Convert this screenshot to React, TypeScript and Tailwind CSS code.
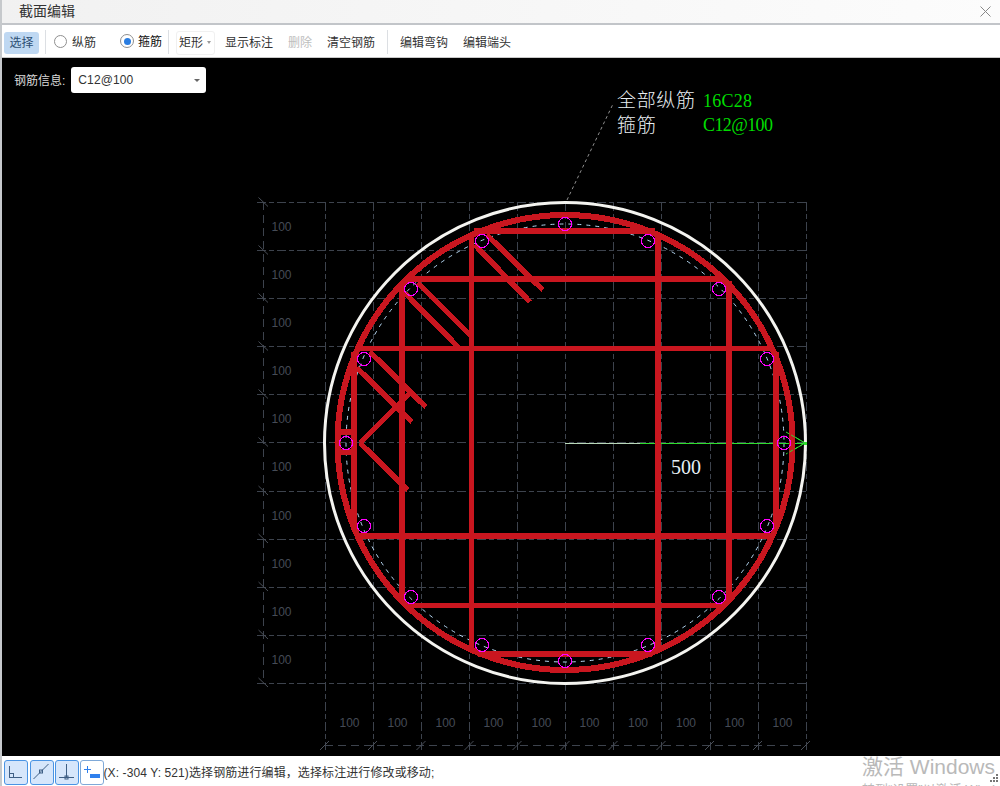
import React from "react";

const RED = "#c9161f";
const xs = [325, 373, 421.5, 469.5, 517.5, 565.5, 613.5, 661.5, 710, 758, 806];
const ys = [202.5, 250.5, 298.5, 346.5, 394.5, 442.5, 491, 539, 587, 635, 683];
const leftLabels = [227, 275, 323, 371, 419, 467.5, 516, 564, 612, 660];
const bottomLabels = [349.5, 397.5, 445.5, 493.5, 541.5, 589.5, 638, 686, 734.5, 782.5];
const bars: [number, number, number, number][] = [
  [474, 231, 655, 231],
  [406, 279, 724, 279],
  [358, 348.5, 774, 348.5],
  [358, 536, 770, 536],
  [406, 605.5, 724, 605.5],
  [478, 654, 652, 654],
  [471.5, 233, 471.5, 652],
  [658, 234, 658, 650],
  [402, 283, 402, 602],
  [729, 281, 729, 602],
  [354, 352, 354, 530],
  [776, 352, 776, 528],
  [475, 245, 530, 302],
  [487, 235, 543, 290],
  [405, 293, 458, 347],
  [418, 283, 472, 337],
  [370, 352, 426, 407],
  [357, 368, 412, 422],
  [360, 443, 410, 393],
  [360, 443, 408, 490],
  [339, 432, 354, 432],
  [339, 452, 354, 452],
];
const pins: [number, number][] = [
  [565, 224], [648, 241], [719, 289], [767, 359], [784, 443], [767, 526], [719, 597], [648, 645],
  [565, 661], [482, 645], [411, 597], [364, 526], [346, 443], [364, 359], [411, 289], [482, 241],
];

function Sep() {
  return <div className="h-[24px] w-px shrink-0 bg-[#dcdfe3]" />;
}

function Section() {
  return (
    <svg className="absolute inset-0 h-full w-full" viewBox="2 58 998 698">
      <g stroke="#3d434d" strokeWidth="1" fill="none" shapeRendering="crispEdges">
        {xs.map((x) => (
          <line key={x} x1={x} y1={202} x2={x} y2={750} strokeDasharray="9 3 5 3" />
        ))}
        {ys.map((y) => (
          <line key={y} x1={257} y1={y} x2={806} y2={y} strokeDasharray="9 3 5 3" />
        ))}
        <line x1={263.5} y1={202} x2={263.5} y2={683} strokeDasharray="8 5" />
        <line x1={325} y1={745.5} x2={806} y2={745.5} strokeDasharray="8 5" />
      </g>
      <g stroke="#4a4f58" strokeWidth="1" fill="none">
        {ys.map((y) => (
          <line key={y} x1={258.5} y1={y - 5} x2={268} y2={y + 4} />
        ))}
        {xs.map((x) => (
          <line key={x} x1={x - 5} y1={750} x2={x + 4} y2={741} />
        ))}
      </g>
      <g fill="#454b56" fontFamily="'Liberation Sans', sans-serif" fontSize="12" textAnchor="middle">
        {leftLabels.map((y) => (
          <text key={y} x={281.5} y={y + 3.5}>100</text>
        ))}
        {bottomLabels.map((x) => (
          <text key={x} x={x} y={727}>100</text>
        ))}
      </g>
      <line x1={567} y1={200} x2={613} y2={104} stroke="#8f8f8f" strokeWidth="1" strokeDasharray="3 3" />
      <circle cx={565} cy={443} r={240.5} fill="none" stroke="#f4f4f0" strokeWidth="3" />
      <circle cx={565} cy={443} r={219} fill="none" stroke="#b5d7f2" strokeWidth="1" strokeDasharray="4 5" />
      <line x1={565} y1={443.5} x2={640} y2={443.5} stroke="#b9d8b9" strokeWidth="1" shapeRendering="crispEdges" />
      <line x1={640} y1={443.5} x2={805} y2={443.5} stroke="#2fe02f" strokeWidth="1" shapeRendering="crispEdges" />
      <circle cx={565} cy={442.5} r={227.5} fill="none" stroke={RED} strokeWidth="6" shapeRendering="crispEdges" />
      <g stroke={RED} strokeWidth="5.5" fill="none" shapeRendering="crispEdges">
        {bars.map(([a, b, c, d], i) => (
          <line key={i} x1={a} y1={b} x2={c} y2={d} />
        ))}
      </g>
      <g stroke="#ff00ff" strokeWidth="1" fill="none" shapeRendering="crispEdges">
        {pins.map(([x, y]) => (
          <circle key={`${x}-${y}`} cx={x} cy={y} r={6.5} />
        ))}
      </g>
      <g stroke="#2fe02f" strokeWidth="1" fill="none">
        <path d="M786 432L805 443L786 454" strokeDasharray="4 2" />
        <path d="M795 437L805 443L795 449" />
      </g>
      <rect x={804} y={442} width={3} height={3} fill="#2fe02f" />
      <g fontFamily="'Noto Sans CJK SC', sans-serif" fontSize="19" fontWeight="300" fill="#e8eef2">
        <text x={617} y={107} textLength={78}>全部纵筋</text>
        <text x={617} y={132} textLength={39}>箍筋</text>
      </g>
      <g fontFamily="'Liberation Serif', serif" fontSize="18" fill="#00dc00">
        <text x={703} y={107} textLength={49}>16C28</text>
        <text x={703} y={131} textLength={70}>C12@100</text>
      </g>
      <text x={671} y={474} fontFamily="'Liberation Serif', serif" fontSize="20" fill="#e6f0f6">500</text>
    </svg>
  );
}

function ModeIcon({ kind }: { kind: "corner" | "slant" | "foot" | "add" }) {
  return (
    <svg width="22" height="22" viewBox="0 0 22 22" fill="none" stroke="#3f5f85" strokeWidth="1">
      {kind === "corner" && (
        <>
          <path d="M4.5 5V16.5H17" />
          <rect x="4.5" y="12.5" width="4" height="4" />
        </>
      )}
      {kind === "slant" && (
        <>
          <path d="M2.5 18L17.5 3" />
          <rect x="8.5" y="9" width="3" height="3" />
        </>
      )}
      {kind === "foot" && (
        <>
          <path d="M10.5 3V16.5M3 16.5H18" />
          <rect x="9" y="15" width="3" height="3" />
        </>
      )}
      {kind === "add" && (
        <>
          <path d="M6.5 5V12M3 8.5H10" stroke="#2f80ed" />
          <rect x="9" y="13" width="10" height="4" fill="#2f80ed" stroke="none" />
        </>
      )}
    </svg>
  );
}

function ModeButton({ kind, active }: { kind: "corner" | "slant" | "foot" | "add"; active?: boolean }) {
  return (
    <div
      className={
        active
          ? "flex h-[25px] w-[24px] shrink-0 items-center justify-center rounded-[3px] border border-[#4a94e4] bg-[#d6e6fb]"
          : "flex h-[25px] w-[24px] shrink-0 items-center justify-center rounded-[3px] border border-[#7fa9d8] bg-white"
      }
    >
      <ModeIcon kind={kind} />
    </div>
  );
}

export default function App() {
  return (
    <div
      className="flex h-[786px] w-[1000px] flex-col overflow-hidden border-l-2 border-[#c6c9cc] bg-white text-[12px] text-[#333]"
      style={{ fontFamily: "'Liberation Sans', 'Noto Sans CJK SC', sans-serif" }}
    >
      <div className="flex h-[23px] shrink-0 items-center bg-linear-to-r from-[#f1f1f1] to-[#fcfcfc] pr-[9px] pl-[17px]">
        <span className="text-[14px] text-[#333]">截面编辑</span>
        <svg className="ml-auto" width="11" height="11" viewBox="0 0 11 11" stroke="#888" strokeWidth="1">
          <path d="M0.5 0.5L10.5 10.5M10.5 0.5L0.5 10.5" />
        </svg>
      </div>
      <div className="h-[2px] shrink-0 bg-[#c2c5c9]" />
      <div className="flex h-[33px] shrink-0 items-center border-b border-[#c8c8c8] bg-white pt-[3px]">
        <div className="ml-[2px] flex h-[22px] w-[35px] items-center justify-center rounded-[3px] bg-[#bfd8f2] text-[#2d4f73]">选择</div>
        <div className="-mt-[2px] ml-[6px]"><Sep /></div>
        <span className="-mt-[2px] ml-[8px] h-[13px] w-[13px] rounded-full border border-[#8f8f8f] bg-white" />
        <span className="ml-[5px]">纵筋</span>
        <span className="-mt-[3px] ml-[24px] flex h-[14px] w-[14px] items-center justify-center rounded-full border border-[#8f8f8f] bg-white">
          <span className="h-[7px] w-[7px] rounded-full bg-[#2a7de1]" />
        </span>
        <span className="-mt-[2px] ml-[4px] text-[#111]">箍筋</span>
        <div className="-mt-[2px] ml-[6px]"><Sep /></div>
        <div className="ml-[7px] flex h-[24px] w-[39px] items-center rounded-[3px] border border-[#f0f0f0] pl-[2px]">
          <span>矩形</span>
          <span className="ml-[4px] h-0 w-0 border-x-[2.5px] border-t-[3px] border-x-transparent border-t-[#999]" />
        </div>
        <span className="ml-[10px]">显示标注</span>
        <span className="ml-[15px] text-[#bdbdbd]">删除</span>
        <span className="ml-[15px]">清空钢筋</span>
        <div className="-mt-[2px] ml-[12px]"><Sep /></div>
        <span className="ml-[12px]">编辑弯钩</span>
        <span className="ml-[15px]">编辑端头</span>
      </div>
      <div className="relative flex-1 bg-black">
        <Section />
        <div className="relative flex items-center pt-[9px] pl-[12px]">
          <span className="mt-[2px] text-[#d8d8d8]">钢筋信息:</span>
          <div className="ml-[6px] flex h-[26px] w-[135px] items-center justify-between rounded-[3px] bg-white pr-[6px] pl-[7px]">
            <span className="text-[12px] tracking-[0.1px] text-[#333]">C12@100</span>
            <span className="h-0 w-0 border-x-[3px] border-t-[3px] border-x-transparent border-t-[#666]" />
          </div>
        </div>
      </div>
      <div className="relative flex h-[30px] shrink-0 items-center bg-white pt-[2px] pl-[2px]">
        <ModeButton kind="corner" active />
        <div className="ml-[1.5px]"><ModeButton kind="slant" active /></div>
        <div className="ml-[1px]"><ModeButton kind="foot" active /></div>
        <div className="ml-[1px]"><ModeButton kind="add" /></div>
        <span className="mt-[2px] tracking-[0.1px] text-[#333]">(X: -304 Y: 521)选择钢筋进行编辑，选择标注进行修改或移动;</span>
        <div className="absolute top-0 left-[860px] text-[#b9b9b9]">
          <div className="text-[21px] leading-[22px] whitespace-nowrap">激活 Windows</div>
          <div className="mt-[4px] text-[13px] leading-[16px] whitespace-nowrap">转到“设置”以激活 Windows。</div>
        </div>
        <svg className="absolute right-[1px] bottom-[3px]" width="9" height="9" viewBox="0 0 9 9" fill="#777">
          <rect x="6" y="0" width="2" height="2" />
          <rect x="3" y="3" width="2" height="2" />
          <rect x="6" y="3" width="2" height="2" />
          <rect x="0" y="6" width="2" height="2" />
          <rect x="3" y="6" width="2" height="2" />
          <rect x="6" y="6" width="2" height="2" />
        </svg>
      </div>
    </div>
  );
}
